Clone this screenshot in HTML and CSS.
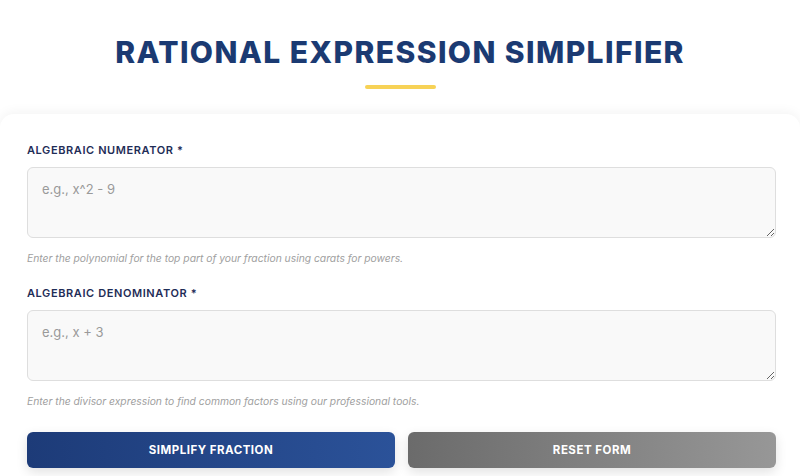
FILE: index.html
```html
<!DOCTYPE html>
<html lang="en">
<head>
    <meta charset="UTF-8">
    <meta name="viewport" content="width=device-width, initial-scale=1.0">
    <title>Rational Expression Simplifier</title>
    <link rel="stylesheet" href="styles.css">
</head>
<body>

    <header class="page-header">
        <h1>Rational Expression Simplifier</h1>
        <div class="accent-line"></div>
    </header>

    <form class="card" onsubmit="return false">
        <div class="field">
            <label for="numerator">Algebraic Numerator *</label>
            <textarea id="numerator" placeholder="e.g., x^2 - 9"></textarea>
            <p class="help">Enter the polynomial for the top part of your fraction using carats for powers.</p>
        </div>

        <div class="field">
            <label for="denominator">Algebraic Denominator *</label>
            <textarea id="denominator" placeholder="e.g., x + 3"></textarea>
            <p class="help">Enter the divisor expression to find common factors using our professional tools.</p>
        </div>

        <div class="actions">
            <button type="submit" class="btn btn-primary">Simplify Fraction</button>
            <button type="reset" class="btn btn-secondary">Reset Form</button>
        </div>
    </form>

</body>
</html>
```

FILE: styles.css
```css
body {
    margin: 0;
    font-family: Inter, "Noto Sans", sans-serif;
    background-color: #ffffff;
    color: #1f2d52;
    overflow: hidden;
}
.page-header {
    text-align: center;
    padding-top: 34px;
}
h1 {
    margin: 0;
    font-size: 30px;
    font-weight: 800;
    letter-spacing: 1.4px;
    text-transform: uppercase;
    color: #1b3a72;
    line-height: 36px;
}
.accent-line {
    width: 71px;
    height: 4px;
    margin: 15px auto 0;
    border-radius: 2px;
    background-color: #f7d256;
}
.card {
    margin-top: 25px;
    padding: 28px 24px 20px 27px;
    background-color: #ffffff;
    border-radius: 14px 14px 0 0;
    box-shadow: 0 -2px 12px rgba(0, 0, 0, 0.05);
}
.field label {
    display: block;
    font-size: 11px;
    font-weight: 600;
    letter-spacing: 0.6px;
    line-height: 16px;
    text-transform: uppercase;
    color: #1f2d57;
}
.field textarea {
    display: block;
    box-sizing: border-box;
    width: 100%;
    height: 71px;
    margin-top: 9px;
    padding: 13px 14px;
    font-family: Inter, "Noto Sans", sans-serif;
    font-size: 13px;
    color: #333;
    background-color: #f9f9f9;
    border: 1.5px solid #dedede;
    border-radius: 6px;
}
.field textarea::placeholder {
    color: #9a9a9a;
}
.help {
    margin: 13px 0 0;
    font-size: 10.3px;
    font-style: italic;
    line-height: 15px;
    color: #a0a0a0;
}
.field + .field {
    margin-top: 19px;
}
.actions {
    display: flex;
    gap: 13px;
    margin-top: 23px;
}
.btn {
    flex: 1;
    height: 36px;
    border: none;
    border-radius: 6px;
    color: white;
    font-family: Inter, "Noto Sans", sans-serif;
    font-size: 11.5px;
    font-weight: 700;
    letter-spacing: 0.5px;
    text-transform: uppercase;
    cursor: pointer;
    box-shadow: 0 4px 12px rgba(0, 0, 0, 0.12);
}
.btn-primary {
    background: linear-gradient(90deg, #1d3b78, #2b5299);
}
.btn-secondary {
    background: linear-gradient(90deg, #6b6b6b, #979797);
}
```
